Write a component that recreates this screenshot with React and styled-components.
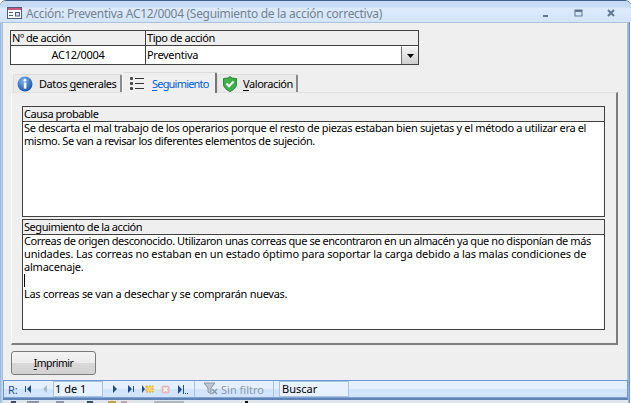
import React from 'react';
import styled, { createGlobalStyle } from 'styled-components';

const GlobalStyle = createGlobalStyle`
  html, body { margin: 0; padding: 0; background: #fff; overflow: hidden; }
  body { font-family: "Noto Sans", "DejaVu Sans", sans-serif; font-size: 11px; color: #000; }
`;

const Window = styled.div`
  width: 631px;
  height: 403px;
  display: flex;
  flex-direction: column;
  box-sizing: border-box;
  background: linear-gradient(90deg, #8fb0d8 0, #c4d9f1 2px, #c4d9f1 628px, #6f93c4 629px, #6f93c4 630px, #fff 630px);
  border-top: 1px solid #3c5f8c;
  border-radius: 6px 6px 0 0;
  overflow: hidden;
`;

const TitleBar = styled.div`
  height: 21px;
  flex: none;
  display: flex;
  align-items: center;
  padding: 3px 10px 0 7px;
  box-sizing: border-box;
  background: linear-gradient(#c7dcf4 0, #c7dcf4 6px, #dceafb 7px, #d3e5fa 100%);
`;

const TitleText = styled.span`
  margin-left: 4px;
  font-size: 12px;
  letter-spacing: -0.3px;
  color: #76828f;
  flex: 1;
  white-space: nowrap;
`;

const Controls = styled.div`
  display: flex;
  gap: 22px;
  margin-right: 5px;
  align-items: center;
`;

const Body = styled.div`
  flex: none;
  height: 358px;
  margin: 0 3px 0 2px;
  padding: 7px 7px 0 7px;
  box-sizing: border-box;
  background: #efefef;
  border-left: 1px solid #a9bfd9;
  border-top: 1px solid #a9c3e0;
  border-right: 1px solid #a9bfd9;
`;

const HeadTable = styled.div`
  width: 409px;
  height: 35px;
  box-sizing: border-box;
  border: 1px solid #404040;
  display: grid;
  grid-template-columns: 134px 1fr;
  grid-template-rows: 15px 1fr;
`;

const HeadCell = styled.div`
  background: #efefef;
  border-left: ${(p) => (p.$divided ? '1px solid #404040' : 'none')};
  border-bottom: 1px solid #404040;
  padding-left: 1px;
  line-height: 14px;
  letter-spacing: -0.45px;
  white-space: nowrap;
`;

const ValueCell = styled.div`
  background: #fff;
  border-left: ${(p) => (p.$divided ? '1px solid #404040' : 'none')};
  display: flex;
  align-items: center;
  justify-content: ${(p) => (p.$center ? 'center' : 'space-between')};
  padding-left: ${(p) => (p.$center ? 0 : 1)}px;
  line-height: 16px;
  letter-spacing: -0.3px;
  white-space: nowrap;
`;

const Combo = styled.div`
  width: 17px;
  height: 100%;
  box-sizing: border-box;
  border-left: 1px solid #6e6e6e;
  border-top: 1px solid #fff;
  background: linear-gradient(#f4f4f4, #cfcfcf);
  display: flex;
  align-items: center;
  justify-content: center;
`;

const TabRow = styled.div`
  display: flex;
  align-items: flex-end;
  height: 20px;
  margin-top: 7px;
  padding-left: 3px;
`;

const Tab = styled.div`
  display: flex;
  align-items: center;
  box-sizing: border-box;
  width: ${(p) => p.$w}px;
  height: ${(p) => (p.$active ? 21 : 18)}px;
  background: ${(p) => (p.$active ? '#efefef' : '#eaeaea')};
  border-top: 1px solid #dcdcdc;
  border-left: 1px solid ${(p) => (p.$active ? '#f8f8f8' : '#dcdcdc')};
  border-right: 2px solid ${(p) => (p.$active ? '#777' : '#8a8a8a')};
  border-radius: 2px 2px 0 0;
  margin-bottom: ${(p) => (p.$active ? -1 : 0)}px;
  padding-left: ${(p) => p.$pad}px;
  position: relative;
  color: ${(p) => (p.$active ? '#0060e0' : '#000')};
  white-space: nowrap;
`;

const TabLabel = styled.span`
  margin-left: ${(p) => p.$gap}px;
  letter-spacing: ${(p) => p.$ls || -0.42}px;
  u { text-underline-offset: 2px; }
`;

const Panel = styled.div`
  width: 607px;
  height: 253px;
  margin-left: 1px;
  box-sizing: border-box;
  background: #efefef;
  border-top: 1px solid #e2e2e2;
  border-left: 1px solid #fafafa;
  border-right: 2px solid #7d7d7d;
  border-bottom: 2px solid #7d7d7d;
  padding: 13px 11px 0 10px;
  display: flex;
  flex-direction: column;
  gap: 2px;
`;

const MemoBox = styled.div`
  width: 583px;
  height: 111px;
  box-sizing: border-box;
  border: 1px solid #404040;
  display: flex;
  flex-direction: column;
`;

const MemoHead = styled.div`
  flex: none;
  height: 15px;
  box-sizing: border-box;
  border-bottom: 1px solid #404040;
  padding-left: 1px;
  line-height: 14px;
  letter-spacing: -0.45px;
`;

const MemoText = styled.div`
  flex: 1;
  background: #fff;
  padding: 0 1px;
`;

const MemoLines = styled.div`
  margin-top: -1px;
  line-height: 13.2px;
  white-space: nowrap;
`;

const MemoLine = styled.div`
  letter-spacing: ${(p) => p.$ls}px;
`;

const Caret = styled.span`
  display: block;
  width: 1px;
  height: 13px;
  background: #000;
`;

const ActionRow = styled.div`
  padding: 6px 0 0 1px;
`;

const PrintButton = styled.button`
  display: block;
  width: 85px;
  height: 24px;
  padding: 0;
  box-sizing: border-box;
  border: 1px solid #7b7b7b;
  border-radius: 3px;
  background: linear-gradient(#f3f3f3 0, #ececec 48%, #d8d8d8 52%, #d2d2d2 100%);
  font-family: inherit;
  font-size: 10.5px;
  letter-spacing: -0.5px;
  color: #000;
  u { text-underline-offset: 2px; }
`;

const NavBar = styled.div`
  flex: none;
  height: 18px;
  margin: 0 3px;
  box-sizing: border-box;
  display: flex;
  align-items: center;
  border: 1px solid #6f97cf;
  border-bottom: 1px solid #7fa3d6;
  background: linear-gradient(#e4efff 0, #e4efff 50%, #d2e4fd 51%, #d2e4fd 100%);
`;

const NavLead = styled.span`
  margin-left: 4px;
  color: #1f4f8f;
  width: 13px;
`;

const NavIcon = styled.span`
  display: inline-flex;
  justify-content: center;
  align-items: center;
  width: ${(p) => p.$w || 14}px;
  height: 14px;
  margin-left: ${(p) => p.$ml || 0}px;
`;

const RecordInput = styled.div`
  box-sizing: border-box;
  width: 50px;
  height: 16px;
  margin-left: 1px;
  border: 1px solid #a9c2e4;
  background: #e8f1ff;
  padding-left: 1px;
  line-height: 14px;
  color: #000;
`;

const NavDivider = styled.span`
  width: 1px;
  height: 16px;
  background: #a9c2e4;
  margin-left: ${(p) => p.$ml}px;
`;

const FilterLabel = styled.span`
  color: #8d99a8;
  margin-left: 2px;
  width: 52px;
  white-space: nowrap;
`;

const SearchBox = styled.div`
  box-sizing: border-box;
  width: 70px;
  height: 16px;
  margin-left: 5px;
  border: 1px solid #a9c2e4;
  background: #e8f1ff;
  padding-left: 2px;
  line-height: 14px;
`;

const BottomFrame = styled.div`
  flex: 1;
  margin: 0 3px;
  border-top: 2px solid #5f83b5;
  background: #dfe6ee;
  display: flex;
  align-items: flex-end;
  gap: 5px;
  padding-left: 8px;
  overflow: hidden;
`;

const Fragment = styled.span`
  flex: none;
  width: ${(p) => p.$w}px;
  height: 2px;
  margin-left: ${(p) => p.$ml || 0}px;
  background: ${(p) => p.$c};
`;

const FormIcon = () => (
  <svg width="15" height="12" viewBox="0 0 15 12">
    <rect x="0.5" y="0.5" width="14" height="11" fill="#fff" stroke="#4f5d80" />
    <rect x="1" y="1" width="13" height="2" fill="#c9587c" />
    <path d="M2 5.500h4M2 8.500h4" stroke="#4f5d80" />
    <rect x="8.500" y="5.500" width="4" height="3.500" fill="#dbe6f5" stroke="#4f5d80" />
  </svg>
);

const MinIcon = () => (
  <svg width="10" height="10" viewBox="0 0 10 10"><rect x="1" y="7" width="5" height="2" fill="#60788f" /></svg>
);
const MaxIcon = () => (
  <svg width="10" height="10" viewBox="0 0 10 10"><rect x="1" y="2" width="7" height="6" fill="none" stroke="#60788f" /><rect x="1" y="2" width="7" height="2" fill="#60788f" /></svg>
);
const CloseIcon = () => (
  <svg width="10" height="10" viewBox="0 0 10 10"><path d="M2 2l6 6M8 2l-6 6" stroke="#60788f" strokeWidth="2" /></svg>
);

const InfoIcon = () => (
  <svg width="16" height="16" viewBox="0 0 16 16">
    <defs>
      <radialGradient id="inf" cx="40%" cy="30%" r="75%">
        <stop offset="0" stopColor="#7db4ee" />
        <stop offset="1" stopColor="#1353a8" />
      </radialGradient>
    </defs>
    <circle cx="8" cy="8" r="7.5" fill="url(#inf)" />
    <circle cx="8" cy="4.200" r="1.400" fill="#fff" />
    <rect x="6.800" y="6.600" width="2.600" height="6" fill="#fff" />
  </svg>
);

const ListIcon = () => (
  <svg width="16" height="14" viewBox="0 0 16 14">
    <rect x="0" y="1" width="3" height="3" rx="1" fill="#444" />
    <rect x="0" y="6" width="3" height="3" rx="1" fill="#444" />
    <rect x="0" y="11" width="3" height="3" rx="1" fill="#444" />
    <path d="M5 2.500h9M5 7.500h9M5 12.500h9" stroke="#333" />
  </svg>
);

const ShieldIcon = () => (
  <svg width="14" height="16" viewBox="0 0 14 16">
    <path d="M7 0.500l2 1.600 4.500 0.400v5.500c0 3.600-3 6-6.500 7.500C3.500 14 0.500 11.600 0.500 8V2.500L5 2.100z" fill="#3fae49" stroke="#2c8a36" />
    <path d="M3.500 7.500l2.500 2.700 4.500-4.700" fill="none" stroke="#fff" strokeWidth="2" />
  </svg>
);

const DropArrow = () => (
  <svg width="7" height="4" viewBox="0 0 7 4"><path d="M0 0h7L3.500 4z" fill="#000" /></svg>
);

const First = () => (
  <svg width="8" height="8" viewBox="0 0 8 8"><rect x="1" y="1" width="1" height="6" fill="#1b4f8f" /><path d="M7 0v8L3 4z" fill="#1b4f8f" /></svg>
);
const Prev = () => (
  <svg width="6" height="8" viewBox="0 0 6 8"><path d="M5 0v8L1 4z" fill="#a9b8cc" /></svg>
);
const Next = () => (
  <svg width="6" height="8" viewBox="0 0 6 8"><path d="M1 0v8l4-4z" fill="#1b4f8f" /></svg>
);
const Last = () => (
  <svg width="8" height="8" viewBox="0 0 8 8"><path d="M1 0v8l4-4z" fill="#1b4f8f" /><rect x="6" y="1" width="1" height="6" fill="#1b4f8f" /></svg>
);
const NewRecord = () => (
  <svg width="12" height="8" viewBox="0 0 12 8">
    <path d="M0 0v8l3-4z" fill="#1b4f8f" />
    <rect x="4" y="1" width="7" height="6" fill="#f6d36b" stroke="#e0a92e" strokeDasharray="2 1" />
  </svg>
);
const DeleteRecord = () => (
  <svg width="9" height="9" viewBox="0 0 9 9">
    <rect x="0.500" y="0.500" width="8" height="8" rx="2" fill="#e4b8b8" />
    <path d="M2.500 2.500l4 4M6.500 2.500l-4 4" stroke="#fff" strokeWidth="1.200" />
  </svg>
);
const LastNew = () => (
  <svg width="11" height="9" viewBox="0 0 11 9">
    <path d="M1 0v9l4-4.500z" fill="#1b4f8f" />
    <rect x="6" y="0" width="1" height="9" fill="#1b4f8f" />
    <rect x="8" y="8" width="1" height="1" fill="#1b4f8f" />
    <rect x="10" y="8" width="1" height="1" fill="#1b4f8f" />
  </svg>
);
const FilterIcon = () => (
  <svg width="16" height="14" viewBox="0 0 16 14">
    <path d="M1 1h11L8 6v6l-3-2V6z" fill="#bcc6d2" stroke="#8d99a8" />
    <path d="M9 7l5 5M14 7l-5 5" stroke="#8d99a8" strokeWidth="1.500" />
  </svg>
);

export default function App() {
  return (
    <>
      <GlobalStyle />
      <Window>
        <TitleBar>
          <FormIcon />
          <TitleText>Acción: Preventiva AC12/0004 (Seguimiento de la acción correctiva)</TitleText>
          <Controls>
            <MinIcon />
            <MaxIcon />
            <CloseIcon />
          </Controls>
        </TitleBar>
        <Body>
          <HeadTable>
            <HeadCell>Nº de acción</HeadCell>
            <HeadCell $divided>Tipo de acción</HeadCell>
            <ValueCell $center>AC12/0004</ValueCell>
            <ValueCell $divided>
              Preventiva
              <Combo><DropArrow /></Combo>
            </ValueCell>
          </HeadTable>
          <TabRow>
            <Tab $w={109} $pad={3}>
              <InfoIcon />
              <TabLabel $gap={6}>Datos <u>g</u>enerales</TabLabel>
            </Tab>
            <Tab $w={95} $pad={7} $active>
              <ListIcon />
              <TabLabel $gap={6} $ls={-0.8}><u>S</u>eguimiento</TabLabel>
            </Tab>
            <Tab $w={81} $pad={5}>
              <ShieldIcon />
              <TabLabel $gap={6}><u>V</u>aloración</TabLabel>
            </Tab>
          </TabRow>
          <Panel>
            <MemoBox>
              <MemoHead>Causa probable</MemoHead>
              <MemoText>
                <MemoLines>
                  <MemoLine $ls={-0.34}>Se descarta el mal trabajo de los operarios porque el resto de piezas estaban bien sujetas y el método a utilizar era el</MemoLine>
                  <MemoLine $ls={-0.41}>mismo. Se van a revisar los diferentes elementos de sujeción.</MemoLine>
                </MemoLines>
              </MemoText>
            </MemoBox>
            <MemoBox>
              <MemoHead>Seguimiento de la acción</MemoHead>
              <MemoText>
                <MemoLines>
                  <MemoLine $ls={-0.43}>Correas de origen desconocido. Utilizaron unas correas que se encontraron en un almacén ya que no disponían de más</MemoLine>
                  <MemoLine $ls={-0.15}>unidades. Las correas no estaban en un estado óptimo para soportar la carga debido a las malas condiciones de</MemoLine>
                  <MemoLine $ls={-0.21}>almacenaje.</MemoLine>
                  <Caret />
                  <MemoLine $ls={-0.29}>Las correas se van a desechar y se comprarán nuevas.</MemoLine>
                </MemoLines>
              </MemoText>
            </MemoBox>
          </Panel>
          <ActionRow>
            <PrintButton><u>I</u>mprimir</PrintButton>
          </ActionRow>
        </Body>
        <NavBar>
          <NavLead>R:</NavLead>
          <NavIcon><First /></NavIcon>
          <NavIcon $ml={3}><Prev /></NavIcon>
          <RecordInput>1 de 1</RecordInput>
          <NavIcon $ml={5}><Next /></NavIcon>
          <NavIcon $ml={2}><Last /></NavIcon>
          <NavIcon $ml={3}><NewRecord /></NavIcon>
          <NavIcon $ml={3}><DeleteRecord /></NavIcon>
          <NavIcon $ml={3}><LastNew /></NavIcon>
          <NavDivider $ml={5} />
          <NavIcon $w={17} $ml={7}><FilterIcon /></NavIcon>
          <FilterLabel>Sin filtro</FilterLabel>
          <NavDivider $ml={0} />
          <SearchBox>Buscar</SearchBox>
        </NavBar>
        <BottomFrame>
          <Fragment $w={5} $c="#34507a" />
          <Fragment $w={12} $c="#8a97a8" $ml={6} />
          <Fragment $w={8} $c="#8a97a8" $ml={12} />
          <Fragment $w={6} $c="#34507a" $ml={18} />
          <Fragment $w={8} $c="#c5a24a" $ml={10} />
          <Fragment $w={6} $c="#caa3a3" />
          <Fragment $w={30} $c="#aeb6c0" $ml={22} />
          <Fragment $w={3} $c="#111" $ml={56} />
        </BottomFrame>
      </Window>
    </>
  );
}
